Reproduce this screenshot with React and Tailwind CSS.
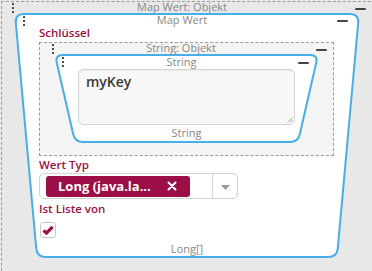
import React from "react";

function roundedPoly(pts, r) {
  const n = pts.length;
  let d = "";
  for (let i = 0; i < n; i++) {
    const p = pts[i];
    const prev = pts[(i - 1 + n) % n];
    const next = pts[(i + 1) % n];
    const l1 = Math.hypot(prev[0] - p[0], prev[1] - p[1]);
    const l2 = Math.hypot(next[0] - p[0], next[1] - p[1]);
    const a = [p[0] + ((prev[0] - p[0]) * r) / l1, p[1] + ((prev[1] - p[1]) * r) / l1];
    const b = [p[0] + ((next[0] - p[0]) * r) / l2, p[1] + ((next[1] - p[1]) * r) / l2];
    d += (i === 0 ? "M" : "L") + a[0].toFixed(2) + "," + a[1].toFixed(2);
    d += "Q" + p[0] + "," + p[1] + " " + b[0].toFixed(2) + "," + b[1].toFixed(2);
  }
  return d + "Z";
}

function TrapBg({ w, h, inset, r }) {
  const d = roundedPoly(
    [
      [1, 1],
      [w - 1, 1],
      [w - 1 - inset, h - 1],
      [1 + inset, h - 1],
    ],
    r
  );
  return (
    <svg className="absolute inset-0" width={w} height={h} viewBox={`0 0 ${w} ${h}`}>
      <path d={d} fill="#ffffff" stroke="#4aaee6" strokeWidth="2" />
    </svg>
  );
}

function Grip() {
  return (
    <div className="flex flex-col gap-[2px]">
      <div className="w-[2px] h-[2px] bg-[#3f3f3f] rounded-[0.5px]" />
      <div className="w-[2px] h-[2px] bg-[#3f3f3f] rounded-[0.5px]" />
      <div className="w-[2px] h-[2px] bg-[#3f3f3f] rounded-[0.5px]" />
    </div>
  );
}

function Minus() {
  return <div className="w-[11px] h-[2px] bg-[#444] rounded-[1px]" />;
}

export default function App() {
  return (
    <div className="w-[372px] h-[271px] overflow-hidden bg-[#e8e8e8] font-['Open_Sans',sans-serif]">
      <div className="ml-px mt-px w-[390px] h-[300px] border border-dashed border-[#9c9c9c]">
        {/* outer header */}
        <div className="flex w-[370px] h-[11px]">
          <div className="w-[12px] pl-[10px] pt-[1px] shrink-0">
            <Grip />
          </div>
          <div className="flex-1 text-center pr-[5px] -mt-px text-[11px] leading-[11px] text-[#888] whitespace-nowrap">
            Map Wert: Objekt
          </div>
          <div className="w-[17px] pr-[6px] pt-[6px] shrink-0">
            <Minus />
          </div>
        </div>

        {/* outer trapezoid */}
        <div className="relative ml-[12px] w-[346px] h-[245px]">
          <TrapBg w={346} h={245} inset={22} r={9} />
          <div className="relative flex flex-col">
            <div className="flex h-[13px]">
              <div className="w-[11px] pl-[9px] pt-[3px] shrink-0">
                <Grip />
              </div>
              <div className="flex-1 text-center pl-[2px] pt-[1px] text-[11px] leading-[12px] text-[#888] whitespace-nowrap">
                Map Wert
              </div>
              <div className="w-[23px] pr-[12px] pt-[7px] shrink-0">
                <Minus />
              </div>
            </div>

            <div className="pl-[25px] flex flex-col">
              <div className="text-[11.5px] leading-[14px] font-semibold text-[#9b0e46]">Schlüssel</div>

              {/* dashed String: Objekt */}
              <div className="mt-[2px] w-[295px] h-[114px] border border-dashed border-[#9c9c9c] bg-[#f4f4f4] flex flex-col">
                <div className="flex h-[11px]">
                  <div className="w-[14px] pl-[12px] pt-[1px] shrink-0">
                    <Grip />
                  </div>
                  <div className="flex-1 text-center pr-[8px] text-[11px] leading-[10px] text-[#888] whitespace-nowrap">
                    String: Objekt
                  </div>
                  <div className="w-[17px] pr-[6px] pt-[6px] shrink-0">
                    <Minus />
                  </div>
                </div>

                {/* inner trapezoid */}
                <div className="relative ml-[14px] w-[265px] h-[89px]">
                  <TrapBg w={265} h={89} inset={20} r={8} />
                  <div className="relative flex flex-col">
                    <div className="flex h-[14px]">
                      <div className="w-[10px] pl-[8px] pt-[3px] shrink-0">
                        <Grip />
                      </div>
                      <div className="flex-1 text-center pl-px pt-[2px] text-[11px] leading-[12px] text-[#888] whitespace-nowrap">
                        String
                      </div>
                      <div className="w-[21px] pr-[10px] pt-[8px] shrink-0">
                        <Minus />
                      </div>
                    </div>
                    <div className="relative mt-[1px] ml-[24px] w-[217px] h-[56px] rounded-[5px] border border-[#d4d4d4] bg-[#f8f8f8] shadow-[inset_0_1px_2px_rgba(0,0,0,0.06)] pl-[7px] pt-[4px]">
                      <div className="text-[14px] leading-[16px] font-semibold text-[#3a3a3a]">myKey</div>
                      <svg className="absolute right-[1px] bottom-[1px]" width="7" height="7" viewBox="0 0 7 7">
                        <path d="M6.5 1.5 L1.5 6.5 M6.5 4 L4 6.5" stroke="#a8a8a8" strokeWidth="1" />
                      </svg>
                    </div>
                    <div className="mt-[2px] text-center text-[11px] leading-[12px] text-[#888]">String</div>
                  </div>
                </div>
              </div>

              <div className="mt-[2px] text-[11.5px] leading-[14px] font-semibold text-[#9b0e46]">Wert Typ</div>

              {/* select */}
              <div className="mt-[1px] w-[199px] h-[26px] rounded-[5px] border border-[#d2d2d2] bg-white flex items-center">
                <div className="ml-[6px] w-[144px] h-[21px] rounded-[3px] bg-[#9b0e46] flex items-center pl-[12px]">
                  <span className="text-[13px] leading-[15px] font-bold text-white whitespace-nowrap">Long (java.la...</span>
                  <svg className="ml-auto mr-[13px]" width="10" height="10" viewBox="0 0 10 10">
                    <path d="M1.5 1.5 L8.5 8.5 M8.5 1.5 L1.5 8.5" stroke="#ffffff" strokeWidth="2" strokeLinecap="round" />
                  </svg>
                </div>
                <div className="ml-[22px] w-px h-[24px] bg-[#d6d6d6]" />
                <div className="flex-1 flex items-center justify-center pt-[3px]">
                  <svg width="9" height="5" viewBox="0 0 9 5">
                    <path d="M0 0 L9 0 L4.5 5 Z" fill="#999" />
                  </svg>
                </div>
              </div>

              <div className="mt-[3px] text-[11.5px] leading-[14px] font-semibold text-[#9b0e46]">Ist Liste von</div>

              <div className="mt-[6px] ml-px w-[16px] h-[16px] rounded-[3px] border border-[#c8c8c8] bg-white flex items-center justify-center">
                <svg width="12" height="10" viewBox="0 0 12 10">
                  <path d="M1.6 5.4 L4.4 8.2 L10.6 1.8" fill="none" stroke="#9b0e46" strokeWidth="3.2" strokeLinejoin="round" />
                </svg>
              </div>
            </div>

            <div className="mt-[5px] text-center text-[11px] leading-[12px] text-[#888]">Long[]</div>
          </div>
        </div>
      </div>
    </div>
  );
}
